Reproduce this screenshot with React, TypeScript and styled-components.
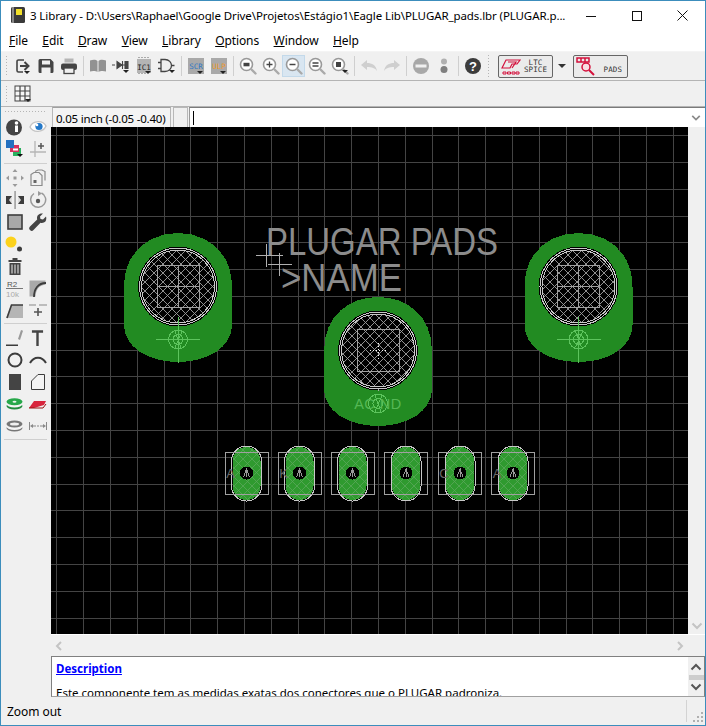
import React from "react";
import styled, { createGlobalStyle } from "styled-components";

const Global = createGlobalStyle`
  * { box-sizing: border-box; }
  html, body { margin: 0; padding: 0; background: #f0f0f0; }
  body { font-family: "Noto Sans", "Liberation Sans", sans-serif; }
`;

const Window = styled.div`
  width: 706px; height: 726px; border: 1px solid #3c8dbc; border-bottom-width: 1px;
  display: flex; flex-direction: column; overflow: hidden; background: #f0f0f0; color: #000;
`;
const TitleBar = styled.div`
  height: 29px; flex: none; background: #fff; display: flex; align-items: center; position: relative;
`;
const AppIcon = styled.div`width: 29px; display: flex; justify-content: flex-end; padding-right: 5px; flex: none; margin-top: -1px;`;
const TitleText = styled.div`font-size: 11.5px; letter-spacing: -0.1px; white-space: nowrap; flex: 1; min-width: 0; margin-top: -1px;`;
const WinButtons = styled.div`display: flex; width: 137px; flex: none; height: 29px;`;
const WinButton = styled.div`flex: 1; display: flex; align-items: center; justify-content: center;`;
const MenuBar = styled.div`
  height: 22px; flex: none; background: #fff; display: flex; align-items: center; gap: 14.5px; padding-left: 8px; font-size: 12px; border-bottom: 1px solid #f4f4f4;
`;
const MenuItem = styled.span`letter-spacing: -0.1px; white-space: nowrap; u { text-underline-offset: 1px; }`;
const Toolbar = styled.div<{ $h: number }>`
  height: ${p => p.$h}px; flex: none; display: flex; align-items: center; background: #f0f0f0;
  border-bottom: 1px solid #b4b4b4; padding-left: 4px;
`;
const Handle = styled.div<{ $h: number }>`
  width: 3px; height: ${p => p.$h}px; flex: none; margin-right: 3px;
  background-image: radial-gradient(#b5b5b5 0.7px, transparent 0.8px); background-size: 3px 3px;
`;
const ToolButton = styled.div<{ $active?: boolean }>`
  width: 23px; height: 22px; flex: none; display: flex; align-items: center; justify-content: center;
  background: ${p => (p.$active ? "#d9e6f1" : "transparent")};
  border: 1px solid ${p => (p.$active ? "#c3d9ea" : "transparent")};
`;
const Sep = styled.div<{ $w?: number }>`
  width: ${p => p.$w ?? 6}px; height: 20px; flex: none; display: flex; justify-content: center;
  &::before { content: ""; width: 1px; background: #cfcfcf; }
`;
const Gap = styled.div<{ $w: number }>`width: ${p => p.$w}px; flex: none;`;
const PluginButton = styled.div`
  width: 55px; height: 23px; flex: none; border: 1px solid #666; border-radius: 2px; background: #ebebeb;
  display: flex; align-items: center; padding-left: 2px; gap: 3px;
`;
const PluginLabel = styled.div`
  font-family: "DejaVu Sans Mono", "Liberation Mono", monospace; font-size: 7.5px; line-height: 7.5px; color: #333; letter-spacing: 0.1px; white-space: pre;
`;
const DropArrow = styled.div`
  width: 0; height: 0; border-left: 4px solid transparent; border-right: 4px solid transparent; border-top: 4px solid #333;
  margin: 0 7px 0 5px; flex: none;
`;
const Main = styled.div`flex: 1; display: flex; min-height: 0;`;
const SideBar = styled.div`
  width: 50px; flex: none; display: flex; flex-direction: column; padding: 3px 3px 0 2px; background: #f0f0f0;
`;
const SideHandle = styled.div`
  height: 3px; flex: none; margin: 0 1px 3px;
  background-image: radial-gradient(#b5b5b5 0.7px, transparent 0.8px); background-size: 3px 3px;
`;
const SideGrid = styled.div`display: grid; grid-template-columns: 23px 23px; grid-auto-rows: 22px; flex: none;`;
const SideCell = styled.div`display: flex; align-items: center; justify-content: center;`;
const SideSep = styled.div<{ $m: number }>`height: 1px; flex: none; background: #cfcfcf; margin: ${p => p.$m}px 1px 3px;`;
const Work = styled.div`flex: 1; display: flex; flex-direction: column; min-width: 0;`;
const CoordRow = styled.div`height: 20px; flex: none; display: flex; align-items: stretch;`;
const CoordBox = styled.div`
  width: 119px; margin-left: 1px; flex: none; border: 1px solid #b8b8b8; border-bottom: 0; border-top-color: #a0a0a0; font-size: 11.5px; letter-spacing: -0.22px;
  display: flex; align-items: center; padding: 1px 0 0 3px; white-space: nowrap; background: #f4f4f4;
`;
const SmallBox = styled.div`width: 15px; margin-left: 2px; flex: none; border: 1px solid #b8b8b8; border-bottom: 0; background: #f0f0f0;`;
const CommandBox = styled.div`
  flex: 1; background: #fff; border-top: 1px solid #7a7a7a; border-left: 1px solid #9a9a9a; margin-left: 1px;
  display: flex; align-items: center; justify-content: space-between; padding: 0 4px 0 3px;
`;
const Caret = styled.div`width: 1px; height: 14px; background: #000;`;
const CanvasRow = styled.div`height: 507px; flex: none; display: flex;`;
const CanvasSvg = styled.svg`width: 637px; height: 507px; flex: none; display: block; background: #000;`;
const VScroll = styled.div`
  flex: 1; background: #f0f0f0; display: flex; flex-direction: column; justify-content: flex-end; align-items: center; padding-bottom: 4px;
`;
const HScroll = styled.div`
  height: 22px; flex: none; background: #f0f0f0; border-top: 1px solid #fff; display: flex; align-items: center; justify-content: space-between; padding: 0 21px 0 4px;
`;
const Description = styled.div`
  height: 41px; flex: none; display: flex; background: #fff; border: 1px solid #808080; border-bottom-color: #a0a0a0; border-right-color: #808080; overflow: hidden;
`;
const DescBody = styled.div`flex: 1; padding: 4px 0 0 4px; font-family: "Noto Sans", sans-serif; font-size: 11.5px; line-height: 16px; white-space: nowrap; overflow: hidden;`;
const DescLink = styled.a`display: block; color: #0000ff; font-weight: 700; text-decoration: underline; font-size: 11.5px; margin-bottom: 8px;`;
const DescScroll = styled.div`
  width: 16px; flex: none; background: #f0f0f0; display: flex; flex-direction: column; align-items: center; justify-content: space-between; padding: 6px 0 5px;
`;
const Thumb = styled.div`width: 15px; height: 5px; background: #cdcdcd;`;
const StatusBar = styled.div`
  height: 28px; flex: none; display: flex; align-items: center; font-size: 12px; padding-left: 6px; position: relative; background: #f0f0f0; letter-spacing: -0.05px;
`;
const StatusSep = styled.div`position: absolute; right: 18px; top: 3px; bottom: 3px; width: 1px; background: #d3d3d3;`;
const Grip = styled.svg`position: absolute; right: 1px; bottom: 1px;`;

const G = "#444";
const Tri = ({ x = 11, y = 12 }: { x?: number; y?: number }) => <path d={`M${x} ${y}h6l-3 3z`} fill="#222" />;

const Lens = ({ children }: { children?: React.ReactNode }) => (
  <svg width="18" height="18" viewBox="0 0 18 18">
    <circle cx="7.5" cy="7.5" r="6" fill="#fff" stroke="#999" strokeWidth="1.6" />
    <path d="M12 12l4.5 4.5" stroke="#aaa" strokeWidth="2.4" strokeLinecap="round" />
    {children}
  </svg>
);

const icons: Record<string, React.ReactNode> = {
  exit: (
    <svg width="18" height="18" viewBox="0 0 18 18" fill="none">
      <path d="M10 3H4.5A1.5 1.5 0 0 0 3 4.5v9A1.5 1.5 0 0 0 4.5 15H9" stroke={G} strokeWidth="1.6" />
      <path d="M6 9h8M10.5 5l4 4-4 4" stroke={G} strokeWidth="2" />
      <Tri x={10} y={14} />
    </svg>
  ),
  save: (
    <svg width="18" height="18" viewBox="0 0 18 18">
      <path d="M1.5 3.5a1.5 1.5 0 0 1 1.5-1.5h10.5l3 3v9.500a1.500 1.500 0 0 1-1.500 1.500H3a1.500 1.500 0 0 1-1.500-1.500z" fill={G} />
      <rect x="5" y="3.500" width="8" height="4" fill="#f0f0f0" />
      <rect x="4.500" y="10.500" width="9" height="5.500" fill="#f0f0f0" />
    </svg>
  ),
  print: (
    <svg width="18" height="18" viewBox="0 0 18 18">
      <rect x="4.500" y="1.500" width="9" height="4" fill="#b5b5b5" />
      <rect x="1" y="6.500" width="16" height="6.500" rx="2" fill={G} />
      <rect x="4" y="11" width="10" height="5.500" fill="#f0f0f0" stroke={G} strokeWidth="1.300" />
    </svg>
  ),
  book: (
    <svg width="18" height="16" viewBox="0 0 18 16">
      <path d="M1 2.500c3-1 6-1 7.500 .5v11c-1.500-1-4.500-1.500-7.500-.5zM17 2.500c-3-1-6-1-7.500 .5v11c1.500-1 4.500-1.500 7.500-.5z" fill="#929292" />
    </svg>
  ),
  diode: (
    <svg width="20" height="18" viewBox="0 0 20 18">
      <path d="M1 8h3M6 4.500v7l5-3.500zM11.500 4v8M12 8h2M14 4.500h3v7h-3z" fill={G} stroke={G} strokeWidth="1.100" />
      <Tri x={12} y={13} />
    </svg>
  ),
  ic: (
    <svg width="18" height="20" viewBox="0 0 18 20">
      <rect x="2" y="3" width="14" height="14" fill="#b4b4b4" />
      <path d="M4 1v2M7 1v2M10 1v2M13 1v2M4 17v2M7 17v2M10 17v2" stroke="#666" strokeDasharray="1 1" />
      <text x="9" y="13.500" textAnchor="middle" fontFamily="DejaVu Sans Mono" fontSize="7.500" fill="#222">IC1</text>
      <Tri x={10} y={15} />
    </svg>
  ),
  gate: (
    <svg width="20" height="18" viewBox="0 0 20 18" fill="none">
      <path d="M4 2.500h4c4 0 6.500 3 6.500 6s-2.500 6-6.500 6H4zM1 5.500h3M1 11.500h3M14.500 8.500h3" stroke={G} strokeWidth="1.300" />
      <Tri x={12} y={13} />
    </svg>
  ),
  scr: (
    <svg width="18" height="20" viewBox="0 0 18 20">
      <rect x="1" y="2" width="16" height="16" fill="#a9a9a9" />
      <text x="9" y="12.500" textAnchor="middle" fontFamily="DejaVu Sans Mono" fontSize="7.500" fill="#2f78c4">SCR</text>
      <Tri x={10} y={15} />
    </svg>
  ),
  ulp: (
    <svg width="18" height="20" viewBox="0 0 18 20">
      <rect x="1" y="2" width="16" height="16" fill="#a9a9a9" />
      <text x="9" y="12.500" textAnchor="middle" fontFamily="DejaVu Sans Mono" fontSize="7.500" fill="#ef9a2a">ULP</text>
      <Tri x={10} y={15} />
    </svg>
  ),
  zfit: <Lens><rect x="4.500" y="5.800" width="6" height="3.500" fill={G} /></Lens>,
  zin: <Lens><path d="M4.500 7.500h6M7.500 4.500v6" stroke={G} strokeWidth="1.300" /></Lens>,
  zout: <Lens><path d="M4.500 7.500h6" stroke={G} strokeWidth="1.500" /></Lens>,
  zsel: <Lens><path d="M4.500 6h6M4.500 9h6" stroke={G} strokeWidth="1.300" /></Lens>,
  zarea: (
    <Lens>
      <rect x="5" y="5" width="5" height="5" fill={G} />
      <Tri x={11} y={13} />
    </Lens>
  ),
  undo: (
    <svg width="20" height="16" viewBox="0 0 20 16">
      <path d="M2 7l6-5v3c5 0 9 2 10 8-2-3-5-4-10-4v3z" fill="#cfcfcf" />
    </svg>
  ),
  redo: (
    <svg width="20" height="16" viewBox="0 0 20 16">
      <path d="M18 7l-6-5v3C7 5 3 7 2 13c2-3 5-4 10-4v3z" fill="#cfcfcf" />
    </svg>
  ),
  stop: (
    <svg width="18" height="18" viewBox="0 0 18 18">
      <circle cx="9" cy="9" r="8" fill="#a8a8a8" />
      <rect x="3.500" y="7.500" width="11" height="3" fill="#f0f0f0" />
    </svg>
  ),
  dots: (
    <svg width="12" height="18" viewBox="0 0 12 18">
      <circle cx="6" cy="4.500" r="3" fill="#b0b0b0" />
      <circle cx="6" cy="12.500" r="3.500" fill="#7f7f7f" />
    </svg>
  ),
  help: (
    <svg width="18" height="18" viewBox="0 0 18 18">
      <circle cx="9" cy="9" r="8" fill="#3c3c3c" />
      <text x="9" y="13.500" textAnchor="middle" fontFamily="Liberation Sans" fontWeight="700" fontSize="13" fill="#fff">?</text>
    </svg>
  ),
  grid: (
    <svg width="18" height="18" viewBox="0 0 18 18">
      <rect x="1" y="1" width="15" height="15" fill="#f6f6f6" stroke={G} />
      <path d="M6 1v15M11 1v15M1 6h15M1 11h15" stroke={G} strokeWidth="1.200" />
      <Tri x={11} y={14} />
    </svg>
  ),
  info: (
    <svg width="17" height="17" viewBox="0 0 17 17">
      <circle cx="8" cy="8.500" r="8" fill={G} />
      <rect x="9" y="6.500" width="3" height="6.500" fill="#fff" />
      <circle cx="10.500" cy="4" r="1.800" fill="#fff" />
    </svg>
  ),
  eye: (
    <svg width="18" height="14" viewBox="0 0 18 14">
      <path d="M1 7c3-7 13-7 16-1-3 7-13 7-16 1z" fill="#fff" stroke="#c4c4c4" strokeWidth="1.400" />
      <circle cx="10" cy="6.500" r="3.600" fill="#2478c8" />
      <circle cx="8" cy="5" r="1.300" fill="#fff" />
    </svg>
  ),
  layers: (
    <svg width="18" height="18" viewBox="0 0 18 18">
      <rect x="7" y="8" width="8" height="8" fill="#28b05e" />
      <rect x="4" y="5" width="9" height="7" fill="#d6305e" />
      <rect x="0" y="0" width="8" height="8" fill="#2370c0" />
      <rect x="7" y="8.500" width="5" height="2" fill="#fff" />
      <path d="M11 14h6l-3 3z" fill="#111" />
    </svg>
  ),
  mark: (
    <svg width="18" height="18" viewBox="0 0 18 18" fill="none">
      <path d="M6 1v16M1 12h16" stroke="#b5b5b5" strokeWidth="1.300" />
      <path d="M9 6h6M12 3v6" stroke="#555" strokeWidth="1.500" />
    </svg>
  ),
  move: (
    <svg width="18" height="18" viewBox="0 0 18 18" fill="#9a9a9a">
      <path d="M9 0l2.500 3h-5zM9 18l-2.500-3h5zM0 9l3-2.500v5zM18 9l-3 2.500v-5z" />
      <rect x="7.500" y="7.500" width="3" height="3" />
    </svg>
  ),
  copy: (
    <svg width="16" height="18" viewBox="0 0 16 18" fill="#f0f0f0" stroke="#8a8a8a" strokeWidth="1.200">
      <path d="M5 2.500l3-1.500h4l3 1.500v9" />
      <path d="M1 5.500l3-2h5l3 3v10H1z" />
      <rect x="3.500" y="11" width="3" height="3" fill="#666" stroke="none" />
    </svg>
  ),
  mirror: (
    <svg width="18" height="18" viewBox="0 0 18 18">
      <path d="M0 5h6v8H0z" fill="#3c3c3c" />
      <path d="M12 5h6v8h-6z" fill="#3c3c3c" />
      <path d="M6 5v8L3 9zM12 5v8l3-4z" fill="#ddd" />
      <rect x="8.200" y="0" width="1.800" height="18" fill="#a8a8a8" />
    </svg>
  ),
  rotate: (
    <svg width="18" height="18" viewBox="0 0 18 18" fill="none">
      <path d="M12.500 2A7.500 7.500 0 1 1 5 2.500" stroke="#9a9a9a" strokeWidth="1.500" />
      <path d="M9 0v5l4-2.500z" fill="#9a9a9a" />
      <circle cx="9" cy="10" r="2.200" fill="#555" />
    </svg>
  ),
  group: (
    <svg width="16" height="16" viewBox="0 0 16 16">
      <rect x="1" y="1" width="14" height="14" fill="#a8a8a8" stroke="#3c3c3c" strokeWidth="1.600" />
    </svg>
  ),
  wrench: (
    <svg width="18" height="18" viewBox="0 0 18 18">
      <path d="M17 3.500l-3 3-2.500-.5-.5-2.500 3-3C11 0 8 1.500 8 5c0 .6.100 1.100.2 1.500L1 13.500a2.400 2.400 0 0 0 3.500 3.500l7-7.200c.5.100 1 .2 1.500.2 3.500 0 5-3 4-6.500z" fill="#444" />
    </svg>
  ),
  dotYellow: (
    <svg width="20" height="18" viewBox="0 0 20 18">
      <circle cx="6" cy="7" r="5.500" fill="#fcd21c" />
      <circle cx="14.500" cy="14" r="2.500" fill="#3c3c3c" />
    </svg>
  ),
  trash: (
    <svg width="14" height="17" viewBox="0 0 14 17">
      <rect x="0.500" y="2" width="13" height="2" fill={G} />
      <rect x="4.500" y="0" width="5" height="2" fill={G} />
      <path d="M1.500 5h11v12h-11z" fill={G} />
      <path d="M4 6.500v9M7 6.500v9M10 6.500v9" stroke="#eee" />
    </svg>
  ),
  r2: (
    <svg width="18" height="18" viewBox="0 0 18 18">
      <text x="1" y="7.500" fontFamily="Liberation Sans" fontSize="8" fill="#555">R2</text>
      <rect x="0" y="9" width="17" height="1" fill="#777" />
      <text x="0" y="17.500" fontFamily="Liberation Sans" fontSize="8" fill="#aaa">10k</text>
    </svg>
  ),
  curve: (
    <svg width="17" height="17" viewBox="0 0 17 17">
      <rect x="0.500" y="0.500" width="16" height="16" fill="#a9a9a9" />
      <path d="M5 17C5 9 9 3 17 3" stroke="#3c3c3c" strokeWidth="1.800" fill="none" />
      <path d="M6.500 17C6.500 10 10 5 17 4.500V17z" fill="#f0f0f0" />
    </svg>
  ),
  miter: (
    <svg width="17" height="17" viewBox="0 0 17 17">
      <path d="M0 16L5 3h12v13z" fill="#b5b5b5" />
      <path d="M1 16L5.500 3H17" stroke="#3c3c3c" strokeWidth="1.600" fill="none" />
    </svg>
  ),
  split: (
    <svg width="18" height="14" viewBox="0 0 18 14" fill="none">
      <path d="M0 2h7M10 2h8" stroke="#aaa" strokeWidth="1.300" />
      <path d="M9 5v8M5 9h8" stroke="#555" strokeWidth="1.600" />
    </svg>
  ),
  line: (
    <svg width="18" height="18" viewBox="0 0 18 18">
      <path d="M12 10L15 1l2 .8L14 11z" fill="#9a9a9a" />
      <rect x="0" y="15.500" width="12" height="1.500" fill="#3c3c3c" />
    </svg>
  ),
  text: (
    <svg width="13" height="16" viewBox="0 0 14 17">
      <path d="M1 1.500h12M7 1.500V17" stroke={G} strokeWidth="2.600" />
    </svg>
  ),
  circle: (
    <svg width="16" height="16" viewBox="0 0 16 16">
      <circle cx="8" cy="8" r="6.500" fill="none" stroke="#3c3c3c" strokeWidth="2" />
    </svg>
  ),
  arc: (
    <svg width="18" height="10" viewBox="0 0 18 10">
      <path d="M1 8C5 1 13 1 17 8" fill="none" stroke="#3c3c3c" strokeWidth="2" />
    </svg>
  ),
  rect: (
    <svg width="12" height="16" viewBox="0 0 12 16">
      <rect width="12" height="16" fill="#444" />
    </svg>
  ),
  poly: (
    <svg width="14" height="16" viewBox="0 0 14 16">
      <path d="M.5 15.500V7L7 .5h6.500v15z" fill="#f4f4f4" stroke="#3c3c3c" />
    </svg>
  ),
  via: (
    <svg width="17" height="12" viewBox="0 0 17 12">
      <ellipse cx="8.500" cy="8" rx="8" ry="3.500" fill="#1f8a3c" />
      <ellipse cx="8.500" cy="6" rx="8" ry="3.500" fill="#f4f4f4" />
      <ellipse cx="8.500" cy="3.800" rx="8" ry="3.500" fill="#27a84a" />
      <ellipse cx="8.500" cy="3.800" rx="2" ry="1" fill="#e8f5ea" />
    </svg>
  ),
  signal: (
    <svg width="18" height="9" viewBox="0 0 18 9">
      <path d="M0 8l5-7h12l-2 4-10 3z" fill="#d8243c" />
      <path d="M0 8h14l3-4" stroke="#911" fill="none" />
    </svg>
  ),
  hole: (
    <svg width="17" height="12" viewBox="0 0 17 12">
      <ellipse cx="8.500" cy="8" rx="8" ry="3.500" fill="#777" />
      <ellipse cx="8.500" cy="6.500" rx="8" ry="3.500" fill="#f4f4f4" />
      <ellipse cx="8.500" cy="4" rx="8" ry="3.500" fill="#777" />
      <ellipse cx="8.500" cy="4" rx="4.500" ry="1.500" fill="#f0f0f0" />
    </svg>
  ),
  dim: (
    <svg width="18" height="8" viewBox="0 0 18 8" fill="#888">
      <path d="M.5 0v8M17.500 0v8" stroke="#888" fill="none" />
      <path d="M1 4l3-2v4zM17 4l-3-2v4z" />
      <path d="M4 3.500h3v1H4zM8 3.500h2v1H8zM11 3.500h3v1h-3z" />
    </svg>
  ),
};

const LtcLogo = () => (
  <svg width="20" height="19" viewBox="0 0 20 19" fill="none">
    <path d="M1 11L5 3h14l-3 4-5 0-2 4zM7 5l8 0-4 6" stroke="#d4103c" strokeWidth="1.200" />
    <path d="M2 15h3v2H2zM6.500 15h3v2h-3zM11 15h3v2h-3zM15 15h3v2h-3z" stroke="#d4103c" strokeWidth="1" />
  </svg>
);
const PadsLogo = () => (
  <svg width="20" height="20" viewBox="0 0 20 20" fill="none" stroke="#d4103c">
    <path d="M1 2h12v4H1zM5 2v4M9 2v4" strokeWidth="1.500" />
    <circle cx="10" cy="11" r="4" fill="#f8dfe4" strokeWidth="1.500" />
    <path d="M13 14l5 5" strokeWidth="2" />
  </svg>
);

const Chevron = ({ up, color, size = 12 }: { up?: boolean; color: string; size?: number }) => (
  <svg width={size} height={8} viewBox="0 0 12 8">
    <path d={up ? "M1.500 6.500L6 2l4.500 4.500" : "M1.500 1.500L6 6l4.500-4.500"} fill="none" stroke={color} strokeWidth="2" />
  </svg>
);

/* ---------- canvas ---------- */
const range = (n: number) => Array.from({ length: n }, (_, i) => i);
const vLines = range(25).map(i => 56.9 + i * 26.8);
const hLines = range(19).map(i => 135.6 + i * 26.8);

const BigPad = ({ cx, top, dotted, children }: { cx: number; top: number; dotted?: boolean; children?: React.ReactNode }) => {
  const cy = top + 53.500;
  const viaY = top + 106.500;
  return (
    <g>
      <path
        d={`M${cx - 54} ${top + 54}C${cx - 54} ${top + 18} ${cx - 28} ${top} ${cx} ${top}C${cx + 28} ${top} ${cx + 54} ${top + 18} ${cx + 54} ${top + 54}V${top + 92}C${cx + 54} ${top + 114} ${cx + 30} ${top + 129} ${cx} ${top + 129}C${cx - 30} ${top + 129} ${cx - 54} ${top + 114} ${cx - 54} ${top + 92}Z`}
        fill="#228b22"
      />
      <path d={`M${cx - 54} ${top + 27}h108M${cx - 54} ${top + 90}h108`} stroke="#3f8f3f" opacity="0" />
      <circle cx={cx} cy={cy} r={40} fill="#000" />
      <circle cx={cx} cy={cy} r={36.500} fill="url(#hatch)" />
      <circle cx={cx} cy={cy} r={38.500} fill="none" stroke="#c8c8c8" />
      <circle cx={cx} cy={cy} r={36.500} fill="none" stroke="#c8c8c8" />
      <rect x={cx - 21} y={cy - 21} width={42} height={42} fill="none" stroke="#a0a0a0" />
      {dotted ? (
        <path d={`M${cx - 8} ${cy}h16M${cx} ${cy - 8}v16`} stroke="#fff" strokeDasharray="1 2" />
      ) : (
        <path d={`M${cx - 21} ${cy}h42M${cx} ${cy - 21}v42`} stroke="#a0a0a0" />
      )}
      <path d={`M${cx} ${cy + 38}v${dotted ? 2 : 7}`} stroke="#aaa" />
      <circle cx={cx} cy={viaY} r={9.500} fill="none" stroke="#5dc45d" />
      <circle cx={cx} cy={viaY} r={5} fill="none" stroke="#5dc45d" />
      <path d={`M${cx - 3} ${viaY - 8}l6 16M${cx + 4} ${viaY - 8}l-7 16`} stroke="#5dc45d" />
      {!dotted && <path d={`M${cx - 22} ${viaY}h44M${cx} ${viaY - 23}v46`} stroke="#5dc45d" />}
      {children}
    </g>
  );
};

const SmallPad = ({ cx, label }: { cx: number; label: string }) => (
  <g>
    <rect x={cx - 14} y={447} width={28} height={53} rx={14} fill="#2f9a2f" />
    <rect x={cx - 14} y={447} width={28} height={53} rx={14} fill="url(#hatchSmall)" />
    <rect x={cx - 15} y={446} width={30} height={55} rx={15} fill="none" stroke="#c8c8c8" />
    <rect x={cx - 21.500} y={452.500} width={43} height={42} fill="none" stroke="#a0a0a0" />
    <circle cx={cx} cy={473} r={6.500} fill="#000" />
    <path d={`M${cx - 3} ${477}l3-8 3 8M${cx} 468v9`} stroke="#999" fill="none" />
    <text x={cx - 16} y={478} fontFamily="Liberation Sans" fontSize="13" textAnchor="middle" fill="#6a6a6a">{label}</text>
  </g>
);

const Canvas = () => (
  <CanvasSvg viewBox="51 127 637 507" shapeRendering="crispEdges">
    <defs>
      <pattern id="hatch" width="9" height="9" patternUnits="userSpaceOnUse" x="1" y="3">
        <path d="M0 0L9 9M9 0L0 9" stroke="#a0a0a0" strokeWidth="0.9" />
      </pattern>
      <pattern id="hatchSmall" width="9" height="9" patternUnits="userSpaceOnUse">
        <path d="M0 0L9 9M9 0L0 9" stroke="#5aa85a" strokeWidth="0.8" />
      </pattern>
    </defs>
    {vLines.map(x => <line key={x} x1={x} x2={x} y1={127} y2={634} stroke="#444" />)}
    {hLines.map(y => <line key={y} x1={51} x2={688} y1={y} y2={y} stroke="#444" />)}
    <BigPad cx={178} top={233} />
    <BigPad cx={378} top={297} dotted>
      <text x={378} y={408.500} textAnchor="middle" fontFamily="Liberation Sans" fontSize="14.500" fill="#55b855" letterSpacing="0.500">AC    ND</text>
    </BigPad>
    <BigPad cx={578.500} top={233} />
    {[["A", 246.500], ["K", 299.500], ["", 352.500], ["", 406], ["C", 460], ["A", 513]].map(([l, x]) => (
      <SmallPad key={x as number} cx={x as number} label={l as string} />
    ))}
    <g fontFamily="Liberation Sans" fill="#8c8c8c" shapeRendering="auto">
      <text x={266} y={255} fontSize="38" textLength={232} lengthAdjust="spacingAndGlyphs">PLUGAR PADS</text>
      <text x={281} y={291} fontSize="38" textLength={121} lengthAdjust="spacingAndGlyphs">&gt;NAME</text>
    </g>
    <path d="M256 255.500h27M266.500 244v23M268 264.500h24M279.500 253v23" stroke="#b0b0b0" />
  </CanvasSvg>
);

const topIcons = ["exit", "save", "print", "|", "book", "diode", "ic", "gate", "|", "scr", "ulp", "|", "zfit", "zin", "zout", "zsel", "zarea", "|", "undo", "redo", "|", "stop", "dots", "|", "help"];
const sideA = ["info", "eye", "layers", "mark"];
const sideB = ["move", "copy", "mirror", "rotate", "group", "wrench", "dotYellow", null, "trash", null, "r2", "curve", "miter", "split"];
const sideC = ["line", "text", "circle", "arc", "rect", "poly", "via", "signal", "hole", "dim"];

const SideSection = ({ names }: { names: (string | null)[] }) => (
  <SideGrid>
    {names.map((n, i) => <SideCell key={i}>{n ? icons[n] : null}</SideCell>)}
  </SideGrid>
);

export default function App() {
  return (
    <>
      <Global />
      <Window>
        <TitleBar>
          <AppIcon>
            <svg width="14" height="16" viewBox="0 0 14 16">
              <rect x="0" y="0" width="14" height="16" rx="1.500" fill="#3a3a3a" />
              <rect x="1" y="0" width="2" height="16" fill="#888" />
              <rect x="5" y="2" width="6" height="6" fill="#f2e02a" />
            </svg>
          </AppIcon>
          <TitleText>3 Library - D:\Users\Raphael\Google Drive\Projetos\Estágio1\Eagle Lib\PLUGAR_pads.lbr (PLUGAR.p...</TitleText>
          <WinButtons>
            <WinButton><svg width="10" height="10"><path d="M0 5.500h10" stroke="#111" /></svg></WinButton>
            <WinButton><svg width="10" height="10"><rect x=".5" y=".5" width="9" height="9" fill="none" stroke="#111" /></svg></WinButton>
            <WinButton><svg width="11" height="11"><path d="M.5.500l10 10M10.500.500l-10 10" stroke="#111" /></svg></WinButton>
          </WinButtons>
        </TitleBar>
        <MenuBar>
          {["File", "Edit", "Draw", "View", "Library", "Options", "Window", "Help"].map(m => (
            <MenuItem key={m}><u>{m[0]}</u>{m.slice(1)}</MenuItem>
          ))}
        </MenuBar>
        <Toolbar $h={29}>
          <Handle $h={22} />
          {topIcons.map((n, i) =>
            n === "|" ? <Sep key={i} /> : <ToolButton key={i} $active={n === "zout"}>{icons[n]}</ToolButton>
          )}
          <Gap $w={3} />
          <Handle $h={24} />
          <Gap $w={5} />
          <PluginButton>
            <LtcLogo />
            <PluginLabel>{" LTC\nSPICE"}</PluginLabel>
          </PluginButton>
          <DropArrow />
          <PluginButton>
            <PadsLogo />
            <PluginLabel>{"\n PADS"}</PluginLabel>
          </PluginButton>
        </Toolbar>
        <Toolbar $h={26}>
          <Handle $h={18} />
          <ToolButton>{icons.grid}</ToolButton>
        </Toolbar>
        <Main>
          <SideBar>
            <SideHandle />
            <SideSection names={sideA} />
            <SideSep $m={3} />
            <SideSection names={sideB} />
            <SideSep $m={2} />
            <SideSection names={sideC} />
            <SideSep $m={2} />
          </SideBar>
          <Work>
            <CoordRow>
              <CoordBox>0.05 inch (-0.05 -0.40)</CoordBox>
              <SmallBox />
              <CommandBox>
                <Caret />
                <Chevron color="#8a8a8a" size={10} />
              </CommandBox>
            </CoordRow>
            <CanvasRow>
              <Canvas />
              <VScroll><Chevron color="#c4c4c4" /></VScroll>
            </CanvasRow>
            <HScroll>
              <svg width="8" height="10" viewBox="0 0 8 10"><path d="M6 1L2 5l4 4" fill="none" stroke="#c4c4c4" strokeWidth="2" /></svg>
              <svg width="8" height="10" viewBox="0 0 8 10"><path d="M2 1l4 4-4 4" fill="none" stroke="#c4c4c4" strokeWidth="2" /></svg>
            </HScroll>
            <Description>
              <DescBody>
                <DescLink>Description</DescLink>
                Este componente tem as medidas exatas dos conectores que o PLUGAR padroniza.
              </DescBody>
              <DescScroll>
                <Chevron up color="#555" />
                <Thumb />
                <Chevron color="#555" />
              </DescScroll>
            </Description>
          </Work>
        </Main>
        <StatusBar>
          Zoom out
          <StatusSep />
          <Grip width="12" height="12" viewBox="0 0 12 12" fill="#b0b0b0">
            <path d="M9 0h2v2H9zM5 4h2v2H5zM9 4h2v2H9zM1 8h2v2H1zM5 8h2v2H5zM9 8h2v2H9z" />
          </Grip>
        </StatusBar>
      </Window>
    </>
  );
}
